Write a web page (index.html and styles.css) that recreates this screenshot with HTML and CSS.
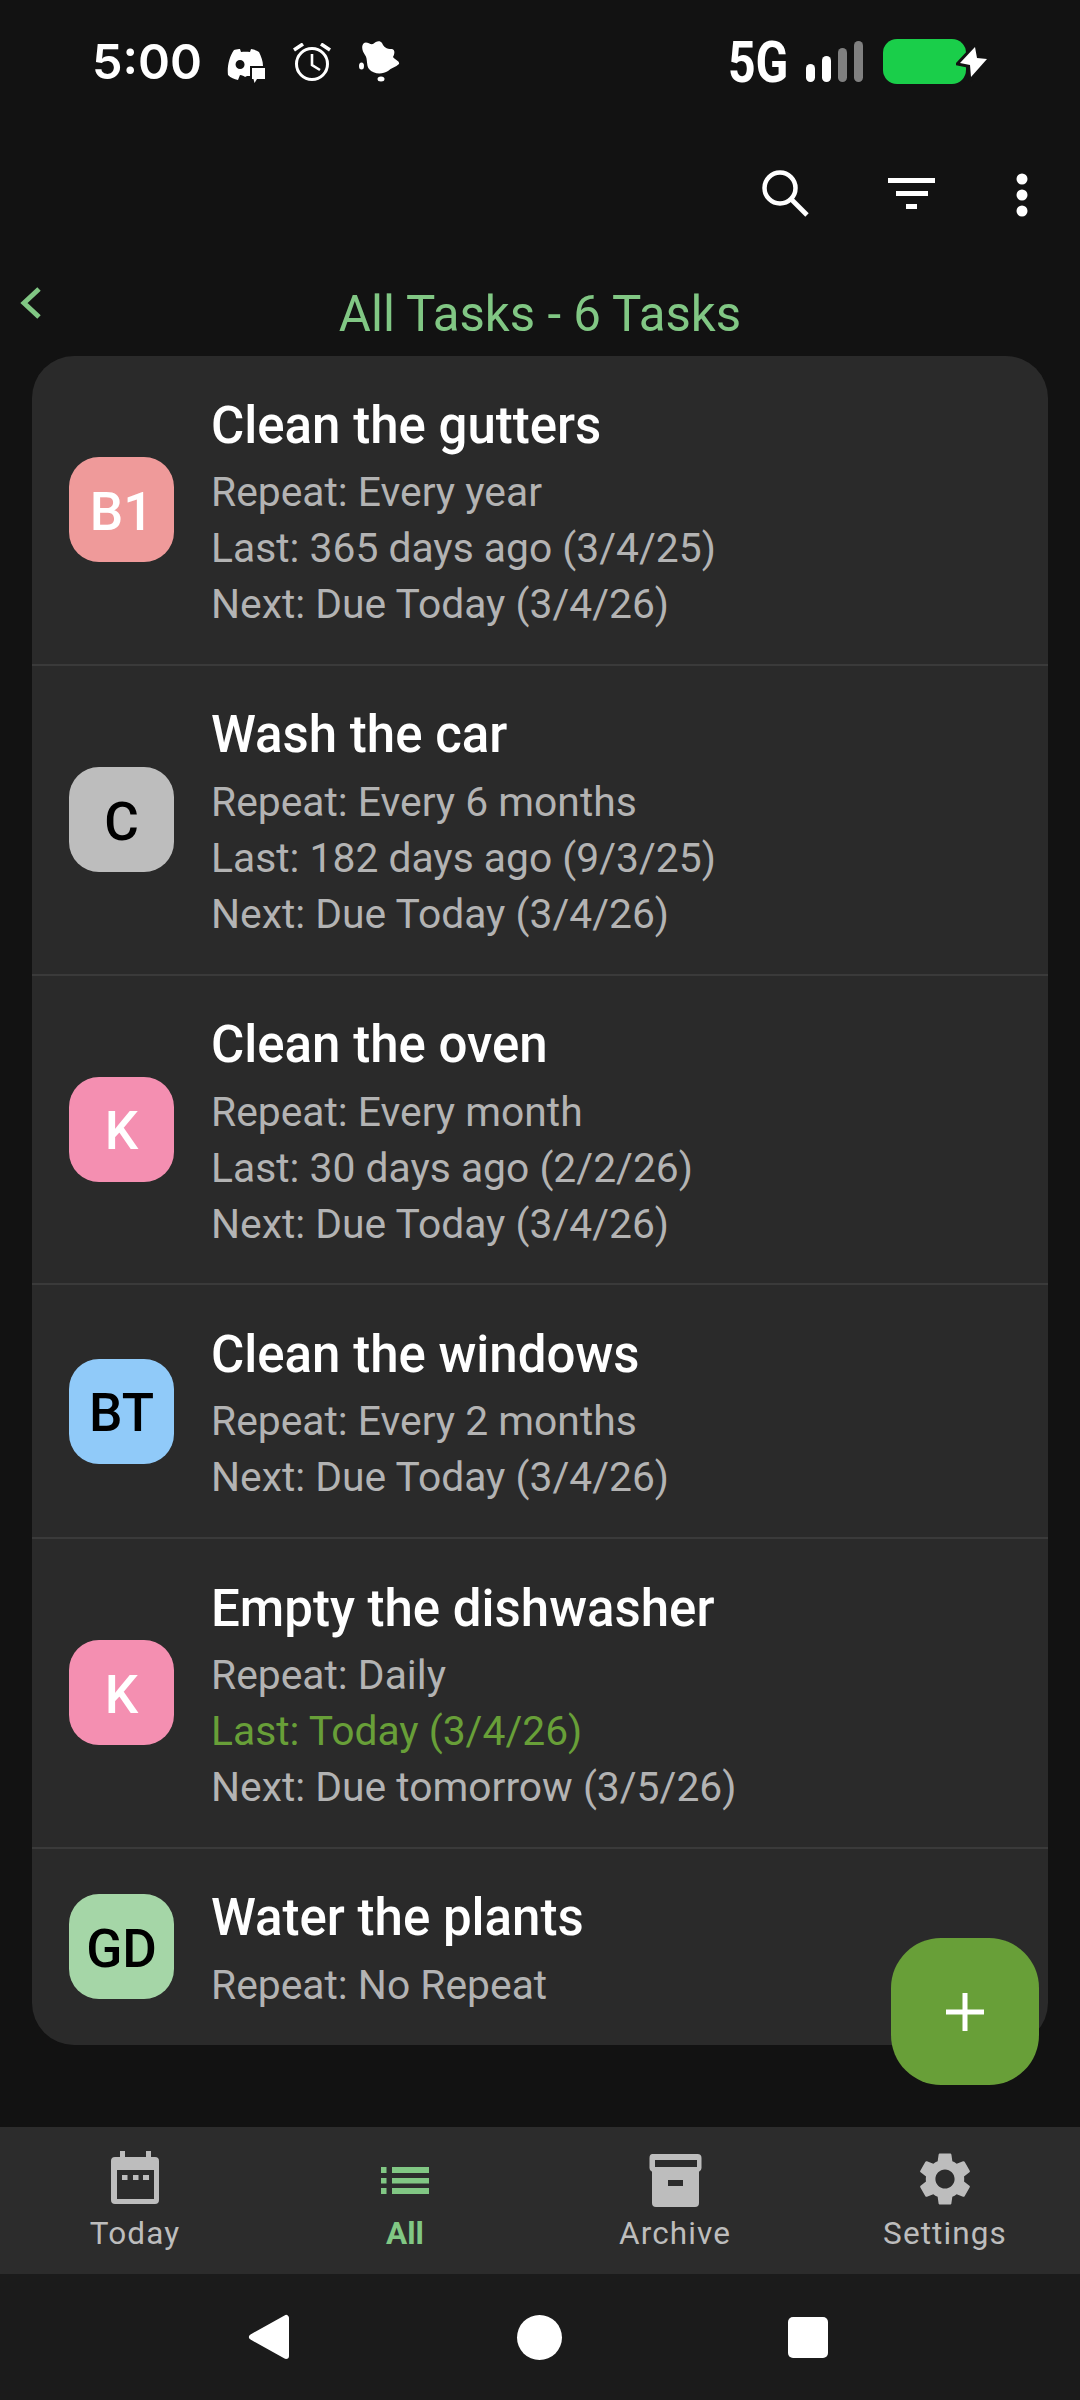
FILE: index.html
```html
<!DOCTYPE html>
<html lang="en">
<head>
  <meta charset="UTF-8" />
  <title>All Tasks</title>
  <link rel="stylesheet" href="styles.css">
</head>
<body>
  <div class="status-bar">
    <span class="clock">5:00</span>
    <svg class="status-icon discord" width="38" height="34" viewBox="0 0 38 34">
      <path fill="#fff" fill-rule="evenodd" d="M7 1 C10 0 12 0 13 0 L14 3 C17 2.500 20 2.500 23 3 L24 0 C27 .5 30 1.500 32 3 C34 7 36 12 36 17 L23 17 L23 27 L20 27 L18 28 C17 27 15 26 13 26 L11 31 C7 30 4 29 1 26 C0 18 2 8 7 1 Z M13 11 A4.500 4.500 0 1 0 13.100 20 A4.500 4.500 0 1 0 13 11 Z"/>
      <path fill="#fff" d="M25 19 H38 V30 H30 L27.500 34 L26.500 30 H25 Z"/>
    </svg>
    <svg class="status-icon alarm" width="38" height="38" viewBox="0 0 38 38">
      <circle cx="19" cy="21" r="15.500" fill="none" stroke="#fff" stroke-width="3"/>
      <path d="M19 11 V22 L27 27" fill="none" stroke="#fff" stroke-width="2.600"/>
      <path d="M1 7 L10 1 M37 7 L28 1" stroke="#fff" stroke-width="3.600"/>
    </svg>
    <svg class="status-icon blob" width="42" height="41" viewBox="0 0 42 41">
      <path fill="#fff" d="M6 2 C9 0 12 4 15 3 C18 0 22 -1 24 2 C26 6 28 8 34 8 C38 9 36 14 35 16 C37 19 42 20 41 23 C38 26 33 27 30 30 C24 34 15 33 11 28 C8 24 10 18 7 14 C4 10 3 5 6 2 Z"/>
      <ellipse cx="3.500" cy="25" rx="2.500" ry="3.500" fill="#fff"/>
      <ellipse cx="23" cy="38" rx="3.500" ry="2.500" fill="#fff"/>
    </svg>
    <span class="network">5G</span>
    <div class="signal">
      <i class="bar b1"></i><i class="bar b2"></i><i class="bar b3 off"></i><i class="bar b4 off"></i>
    </div>
    <div class="battery">
      <svg class="bolt" width="34" height="38" viewBox="0 0 34 38">
        <path fill="#fff" stroke="#121212" stroke-width="6" paint-order="stroke" d="M19 3 L4 19 L14 21 L15 33 L31 15 L21 14 Z"/>
      </svg>
    </div>
  </div>

  <div class="toolbar">
    <svg class="tool-icon" width="47" height="47" viewBox="0 0 47 47">
      <circle cx="18" cy="18" r="15.500" fill="none" stroke="#fff" stroke-width="4.500"/>
      <path d="M29 29 L45 45" stroke="#fff" stroke-width="4.800"/>
    </svg>
    <svg class="tool-icon filter" width="47" height="32" viewBox="0 0 47 32">
      <path fill="#fff" d="M0 0 H47 V5 H0 Z M8 13 H40 V18 H8 Z M18 26 H29 V31 H18 Z"/>
    </svg>
    <svg class="tool-icon dots" width="12" height="44" viewBox="0 0 12 44">
      <circle cx="6" cy="6" r="5.500" fill="#fff"/>
      <circle cx="6" cy="22" r="5.500" fill="#fff"/>
      <circle cx="6" cy="38" r="5.500" fill="#fff"/>
    </svg>
  </div>

  <div class="title-row">
    <svg class="back" width="22" height="32" viewBox="0 0 22 32">
      <path d="M19 2 L4 16 L19 30" fill="none" stroke="#81c784" stroke-width="5"/>
    </svg>
    <h1>All Tasks - 6 Tasks</h1>
  </div>

  <div class="task-card">
    <div class="task">
      <div class="avatar light red">B1</div>
      <div class="task-text">
        <div class="task-name">Clean the gutters</div>
        <div class="task-line">Repeat: Every year</div>
        <div class="task-line">Last: 365 days ago (3/4/25)</div>
        <div class="task-line">Next: Due Today (3/4/26)</div>
      </div>
    </div>
    <div class="task">
      <div class="avatar grey">C</div>
      <div class="task-text">
        <div class="task-name">Wash the car</div>
        <div class="task-line">Repeat: Every 6 months</div>
        <div class="task-line">Last: 182 days ago (9/3/25)</div>
        <div class="task-line">Next: Due Today (3/4/26)</div>
      </div>
    </div>
    <div class="task">
      <div class="avatar light pink">K</div>
      <div class="task-text">
        <div class="task-name">Clean the oven</div>
        <div class="task-line">Repeat: Every month</div>
        <div class="task-line">Last: 30 days ago (2/2/26)</div>
        <div class="task-line">Next: Due Today (3/4/26)</div>
      </div>
    </div>
    <div class="task">
      <div class="avatar blue">BT</div>
      <div class="task-text">
        <div class="task-name">Clean the windows</div>
        <div class="task-line">Repeat: Every 2 months</div>
        <div class="task-line">Next: Due Today (3/4/26)</div>
      </div>
    </div>
    <div class="task">
      <div class="avatar light pink">K</div>
      <div class="task-text">
        <div class="task-name">Empty the dishwasher</div>
        <div class="task-line">Repeat: Daily</div>
        <div class="task-line done">Last: Today (3/4/26)</div>
        <div class="task-line">Next: Due tomorrow (3/5/26)</div>
      </div>
    </div>
    <div class="task">
      <div class="avatar green">GD</div>
      <div class="task-text">
        <div class="task-name">Water the plants</div>
        <div class="task-line">Repeat: No Repeat</div>
      </div>
    </div>
  </div>

  <button class="fab">
    <svg width="38" height="38" viewBox="0 0 38 38"><path fill="#fff" d="M16.500 0 H21.500 V16.500 H38 V21.500 H21.500 V38 H16.500 V21.500 H0 V16.500 H16.500 Z"/></svg>
  </button>

  <div class="spacer"></div>

  <nav class="bottom-nav">
    <div class="nav-item">
      <svg width="64" height="64" viewBox="0 0 64 64">
        <path fill="#bdbdbd" fill-rule="evenodd" d="M17 4 H22 V10 H43 V4 H48 V10 H52 A4 4 0 0 1 56 14 V53 A4 4 0 0 1 52 57 H12 A4 4 0 0 1 8 53 V14 A4 4 0 0 1 12 10 H17 Z M14 23 V52 H51 V23 Z"/>
        <path fill="#bdbdbd" d="M19 28 H24.500 V33 H19 Z M30 28 H35.500 V33 H30 Z M40 28 H46 V33 H40 Z"/>
      </svg>
      <span>Today</span>
    </div>
    <div class="nav-item active">
      <svg width="64" height="64" viewBox="0 0 64 64">
        <path fill="#81c784" d="M8 20 H13.500 V26 H8 Z M19 20 H56 V26 H19 Z M8 31 H13.500 V36.500 H8 Z M19 31 H56 V36.500 H19 Z M8 41 H13.500 V47 H8 Z M19 41 H56 V47 H19 Z"/>
      </svg>
      <span>All</span>
    </div>
    <div class="nav-item">
      <svg width="64" height="64" viewBox="0 0 64 64">
        <path fill="#bdbdbd" fill-rule="evenodd" d="M9.500 7 H54.500 A4 4 0 0 1 58.500 11 V21 A4 4 0 0 1 56 24.800 V56 A4 4 0 0 1 52 60 H13 A4 4 0 0 1 9 56 V24.800 A4 4 0 0 1 6.500 21 V11 A3 4 0 0 1 9.500 7 Z M12 13 V20 H54 V13 Z M25 33 V39 H40 V33 Z"/>
      </svg>
      <span>Archive</span>
    </div>
    <div class="nav-item">
      <svg width="64" height="64" viewBox="0 0 24 24">
        <path fill="#bdbdbd" d="M19.14 12.94c.04-.3.06-.61.06-.94 0-.32-.02-.64-.07-.94l2.03-1.58c.18-.14.23-.41.12-.61l-1.92-3.32c-.12-.22-.37-.29-.59-.22l-2.39.96c-.5-.38-1.03-.7-1.62-.94l-.36-2.54c-.04-.24-.24-.41-.48-.41h-3.84c-.24 0-.43.17-.47.41l-.36 2.54c-.59.24-1.13.57-1.62.94l-2.39-.96c-.22-.08-.47 0-.59.22L2.74 8.87c-.12.21-.08.47.12.61l2.03 1.58c-.05.3-.09.63-.09.94s.02.64.07.94l-2.03 1.58c-.18.14-.23.41-.12.61l1.92 3.32c.12.22.37.29.59.22l2.39-.96c.5.38 1.03.7 1.62.94l.36 2.54c.05.24.24.41.48.41h3.84c.24 0 .44-.17.47-.41l.36-2.54c.59-.24 1.13-.56 1.62-.94l2.39.96c.22.08.47 0 .59-.22l1.92-3.32c.12-.22.07-.47-.12-.61l-2.01-1.58zM12 15.6c-1.98 0-3.6-1.62-3.6-3.6s1.62-3.6 3.6-3.6 3.6 1.62 3.6 3.6-1.62 3.6-3.6 3.6z"/>
      </svg>
      <span>Settings</span>
    </div>
  </nav>

  <div class="system-nav">
    <svg width="42" height="46" viewBox="0 0 42 46">
      <path fill="#fff" stroke="#fff" stroke-width="6" stroke-linejoin="round" d="M4 23 L38 4 V42 Z"/>
    </svg>
    <div class="sys-circle"></div>
    <div class="sys-square"></div>
  </div>
</body>
</html>
```

FILE: styles.css
```css
* { box-sizing: border-box; }

body {
  margin: 0;
  width: 1080px;
  height: 2400px;
  position: relative;
  display: flex;
  flex-direction: column;
  background: #121212;
  font-family: Roboto, sans-serif;
  overflow: hidden;
}

/* status bar */
.status-bar {
  height: 88px;
  padding: 35px 0 0 92px;
  display: flex;
  align-items: center;
  color: #fff;
}

.clock {
  font-family: Inter, Roboto, sans-serif;
  font-size: 48.500px;
  font-weight: 600;
  line-height: 40px;
  width: 135px;
}

.status-icon { flex: none; }
.discord { margin: 8px 28px 0 0; }
.alarm { margin-right: 27px; }

.network {
  margin-left: 328px;
  font-size: 58px;
  font-weight: 700;
  line-height: 42px;
  width: 58px;
  transform: scaleX(0.83);
  transform-origin: left center;
}

.signal {
  margin-left: 20px;
  height: 41px;
  display: flex;
  align-items: flex-end;
  gap: 7px;
}

.bar {
  width: 9px;
  background: #fff;
  border-radius: 5px;
}
.bar.off { background: #808080; }
.b1 { height: 18px; }
.b2 { height: 26px; }
.b3 { height: 34px; }
.b4 { height: 41px; }

.battery {
  margin-left: 20px;
  width: 83px;
  height: 45px;
  background: #1ace4a;
  border-radius: 14px;
  position: relative;
}

.bolt {
  position: absolute;
  left: 73px;
  top: 5px;
}

/* toolbar */
.toolbar {
  height: 172px;
  padding: 82px 0 0 762px;
  display: flex;
  align-items: flex-start;
}

.filter { margin: 8px 0 0 79px; }
.dots { margin: 3px 0 0 81px; }

.title-row {
  height: 96px;
  display: grid;
  grid-template-columns: 1fr auto 1fr;
  align-items: start;
}

.back { margin: 27px 0 0 20px; }

h1 {
  margin: 0;
  font-size: 49.200px;
  font-weight: 400;
  line-height: 56px;
  padding-top: 26px;
  color: #81c784;
  grid-column: 2;
}

/* list card */
.task-card {
  margin: 0 32px;
  background: #2a2a2a;
  border-radius: 42px;
  overflow: hidden;
}

.task {
  display: flex;
  align-items: center;
  padding: 39.500px 37px 31.750px;
  border-bottom: 2px solid #3a3a3a;
}
.task:last-child { border-bottom: 0; }

.avatar {
  flex: none;
  width: 105px;
  height: 105px;
  margin: 0 37px 8px 0;
  padding-top: 4px;
  border-radius: 30px;
  display: flex;
  align-items: center;
  justify-content: center;
  font-size: 53px;
  font-weight: 500;
  color: #000;
}
.avatar.light { color: #fff; }
.red { background: #ef9a9a; }
.grey { background: #bdbdbd; }
.pink { background: #f48fb1; }
.blue { background: #90caf9; }
.green { background: #a5d6a7; }

.task-name {
  font-size: 51px;
  font-weight: 500;
  line-height: 60px;
  margin-bottom: 8.500px;
  color: #fff;
}

.task-line {
  font-size: 40.800px;
  line-height: 56px;
  color: #b3b3b3;
}
.task-line.done { color: #689f38; }

.fab {
  position: absolute;
  left: 891px;
  top: 1938px;
  width: 148px;
  height: 147px;
  padding: 0;
  border: 0;
  border-radius: 50px;
  background: #689f38;
  display: flex;
  align-items: center;
  justify-content: center;
}

.spacer { flex: 1; }

/* bottom tabs */
.bottom-nav {
  height: 147px;
  background: #2c2c2c;
  display: grid;
  grid-template-columns: repeat(4, 1fr);
}

.nav-item {
  display: flex;
  flex-direction: column;
  align-items: center;
  padding-top: 20px;
  color: #bdbdbd;
  font-size: 31.500px;
  letter-spacing: 1.100px;
  line-height: 36px;
}
.nav-item span { margin-top: 5px; }
.nav-item.active {
  color: #81c784;
  font-weight: 700;
  letter-spacing: 0;
}

/* android buttons */
.system-nav {
  height: 126px;
  background: #1b1b1b;
  position: relative;
  display: grid;
  grid-template-columns: 248px 20px 1fr;
  align-items: center;
}
.system-nav svg { margin-left: 248px; }

.sys-circle {
  position: absolute;
  left: 517px;
  top: 41px;
  width: 45px;
  height: 45px;
  background: #fff;
  border-radius: 50%;
}

.sys-square {
  position: absolute;
  left: 788px;
  top: 43px;
  width: 40px;
  height: 41px;
  background: #fff;
  border-radius: 5px;
}
```
